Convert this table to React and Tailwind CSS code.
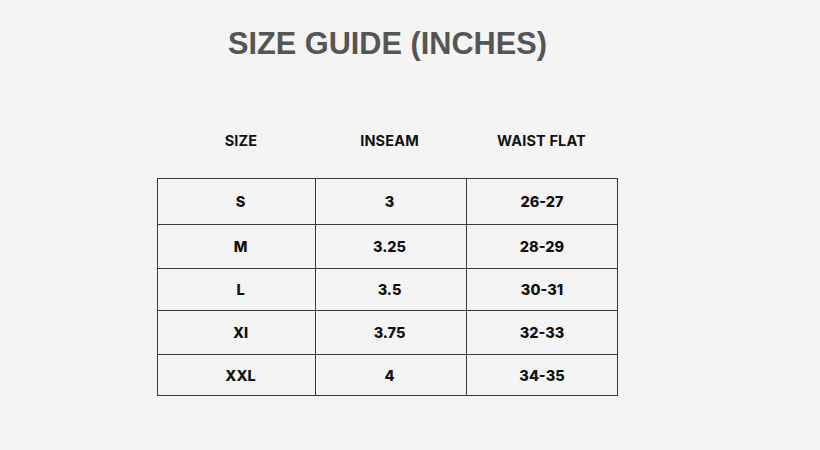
import React from 'react'

const rows = [
    { size: 'S', inseam: '3', waist: '26-27', h: 'h-[46px]' },
    { size: 'M', inseam: '3.25', waist: '28-29', h: 'h-[44px]' },
    { size: 'L', inseam: '3.5', waist: '30-31', h: 'h-[42px]' },
    { size: 'Xl', inseam: '3.75', waist: '32-33', h: 'h-[44px]' },
    { size: 'XXL', inseam: '4', waist: '34-35', h: 'h-[41px]' },
]

const App = () => {
    return (
        <div className="w-[820px] h-[450px] bg-[#f4f4f4] overflow-hidden">
            <div className="ml-[157px] w-[461px] pt-[29px]">
                <h1 className="text-center text-[30.7px] leading-none font-bold text-[#555555] font-['Liberation_Sans',Arial,sans-serif]">
                    SIZE GUIDE (INCHES)
                </h1>

                <div className="mt-[70px] grid grid-cols-[158px_151px_151px] text-[14.5px] font-bold text-[#111111] font-['Inter',sans-serif] tracking-[0.01em]">
                    <p className="text-center pl-[10px]">SIZE</p>
                    <p className="text-center pr-[2px]">INSEAM</p>
                    <p className="text-center">WAIST FLAT</p>
                </div>

                <table className="mt-[27px] border-collapse table-fixed font-['Inter',sans-serif] text-[14.5px] font-extrabold text-[#111111]">
                    <colgroup>
                        <col className="w-[158px]" />
                        <col className="w-[151px]" />
                        <col className="w-[151px]" />
                    </colgroup>
                    <tbody>
                        {rows.map((row) => (
                            <tr key={row.size} className={row.h}>
                                <td className="border border-[#3a3a3a] text-center p-0 pl-[8px]">{row.size}</td>
                                <td className="border border-[#3a3a3a] text-center p-0 pr-[3px]">{row.inseam}</td>
                                <td className="border border-[#3a3a3a] text-center p-0">{row.waist}</td>
                            </tr>
                        ))}
                    </tbody>
                </table>
            </div>
        </div>
    )
}

export default App
